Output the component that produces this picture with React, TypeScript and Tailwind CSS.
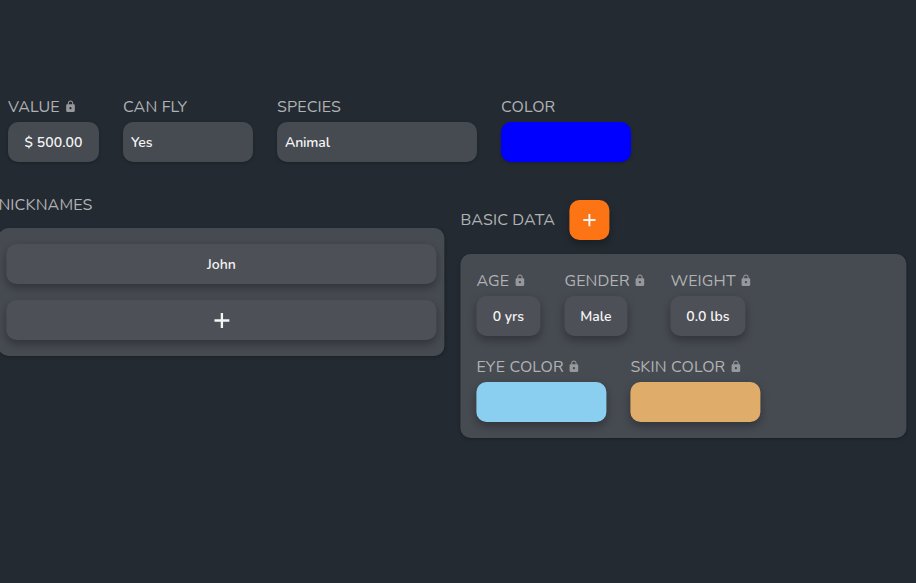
import type { ReactNode } from "react";
import { MdLock } from "react-icons/md";

function Label({ children, locked = false }: { children: string; locked?: boolean }) {
  return (
    <div className="mb-1 flex h-6 items-center gap-1 whitespace-nowrap text-base leading-6 text-[#b0b2b4]">
      <span className="pt-[2px] tracking-[0.13px]">{children}</span>
      {locked && <MdLock className="size-[13px] shrink-0 text-[#96989b]" />}
    </div>
  );
}

function Field({ label, locked, width, box, children }: {
  label: string;
  locked?: boolean;
  width: string;
  box: string;
  children?: ReactNode;
}) {
  return (
    <div className={`shrink-0 ${width}`}>
      <Label locked={locked}>{label}</Label>
      <div className={`flex h-10 items-center whitespace-nowrap rounded-[10px] pt-[2px] text-sm font-semibold text-[#f5f5f5] ${box}`}>
        {children}
      </div>
    </div>
  );
}

function Plus({ className }: { className: string }) {
  return (
    <svg viewBox="0 0 16 16" className={className} fill="none" stroke="currentColor" strokeWidth="2.2">
      <path d="M8 1v14M1 8h14" />
    </svg>
  );
}

const flat = "bg-[#464a51] shadow-[0_1px_3px_rgba(0,0,0,0.25)]";
const raised = "bg-[#4e5058] shadow-[0_4px_8px_rgba(0,0,0,0.3)]";
const swatch = "shadow-[0_4px_8px_rgba(0,0,0,0.3)]";

export default function App() {
  return (
    <main className="h-[583px] w-[916px] overflow-hidden bg-[#232a31] pt-[94px] font-['Nunito','Noto_Sans',sans-serif]">
      <section className="flex gap-6 pl-2">
        <Field label="VALUE" locked width="w-[91px]" box={`justify-center tracking-[0.1px] ${flat}`}>$ 500.00</Field>
        <Field label="CAN FLY" width="w-[130px]" box={`px-2 ${flat}`}>Yes</Field>
        <Field label="SPECIES" width="w-[200px]" box={`px-2 tracking-[-0.15px] ${flat}`}>Animal</Field>
        <Field label="COLOR" width="w-[130px]" box="bg-[#0000ff] shadow-[0_1px_3px_rgba(0,0,0,0.25)]" />
      </section>

      <section className="-ml-[2px] mt-[30px] flex translate-x-[0.4px] items-start gap-4">
        <div className="w-[446px] shrink-0">
          <Label>NICKNAMES</Label>
          <div className="mt-3 flex h-32 flex-col gap-4 rounded-[10px] bg-[#464a51] px-2 py-4 shadow-[0_1px_3px_rgba(0,0,0,0.25)]">
            <div className={`flex h-10 items-center justify-center rounded-[10px] pt-[2px] text-sm font-semibold text-[#f5f5f5] ${raised}`}>John</div>
            <button className={`flex h-10 items-center justify-center rounded-[10px] text-[#f5f5f5] ${raised}`}>
              <Plus className="size-[17px]" />
            </button>
          </div>
        </div>

        <div className="mt-2 w-[446px] shrink-0">
          <div className="flex h-10 items-center">
            <div className="w-[109px] pt-[2px]"><Label>BASIC DATA</Label></div>
            <button className="flex size-10 items-center justify-center rounded-[10px] bg-[#fd7414] text-[#f5f5f5] shadow-[0_4px_6px_rgba(0,0,0,0.25)]">
              <Plus className="size-[14px]" />
            </button>
          </div>
          <div className="mt-[14px] h-[184px] rounded-[10px] bg-[#464a51] px-4 pt-[14px] shadow-[0_1px_3px_rgba(0,0,0,0.25)]">
            <div className="flex gap-6">
              <Field label="AGE" locked width="w-16" box={`justify-center ${raised}`}>0 yrs</Field>
              <Field label="GENDER" locked width="w-[82px]" box={`w-[63px] justify-center ${raised}`}>Male</Field>
              <Field label="WEIGHT" locked width="w-[82px]" box={`w-[75px] justify-center ${raised}`}>0.0 lbs</Field>
            </div>
            <div className="mt-[18px] flex gap-6">
              <Field label="EYE COLOR" locked width="w-[130px]" box={`bg-[#8bcff0] ${swatch}`} />
              <Field label="SKIN COLOR" locked width="w-[130px]" box={`bg-[#e0ac69] ${swatch}`} />
            </div>
          </div>
        </div>
      </section>
    </main>
  );
}
